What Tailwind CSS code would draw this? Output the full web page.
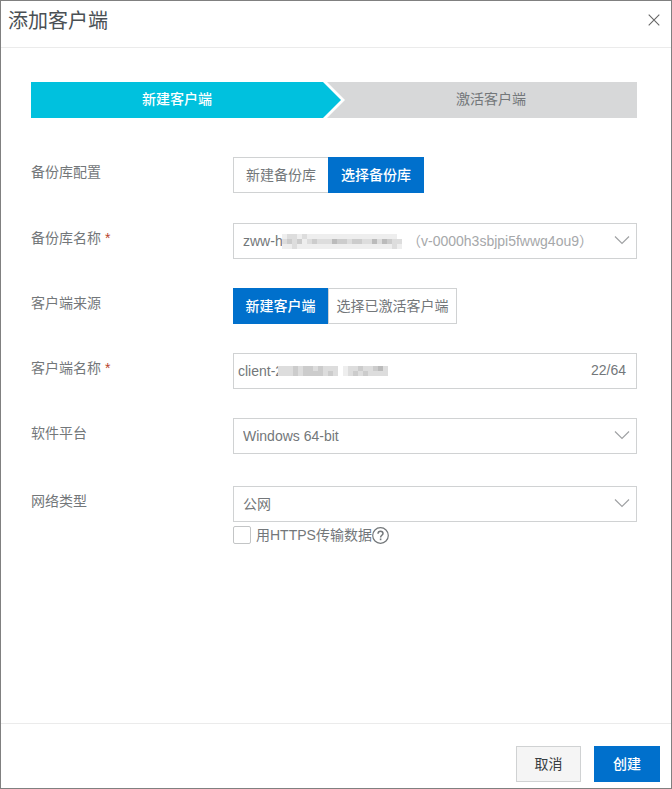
<!DOCTYPE html>
<html lang="zh-CN">
<head>
  <meta charset="UTF-8" />
  <meta name="viewport" content="width=device-width, initial-scale=1.0" />
  <title>添加客户端</title>
  <script src="https://cdn.jsdelivr.net/npm/@tailwindcss/browser@4"></script>
</head>
<body class="bg-white font-['Liberation_Sans','Noto_Sans_CJK_SC',sans-serif] text-sm text-[#73777a]">
  <div role="dialog" aria-labelledby="title" class="flex min-h-screen flex-col border border-[#808080]">
    <header class="flex h-[47px] items-center justify-between border-b border-[#ebebeb] pl-[7px] pr-[11px] pb-2">
      <h1 id="title" class="pt-0.5 text-xl text-[#4a5054]">添加客户端</h1>
      <button type="button" aria-label="关闭" class="text-[#666]">
        <svg class="size-3" viewBox="0 0 12 12" fill="none" stroke="currentColor" stroke-width="1.1"><path d="M.7.7l10.6 10.6M11.3.7L.7 11.3" /></svg>
      </button>
    </header>

    <main class="flex-1 pt-[34px] pr-[34px] pl-[30px]">
      <ol class="mb-[39px] flex h-9 text-center leading-[34px]">
        <li class="flex-1 bg-[#00c1de] font-medium text-white" aria-current="step">新建客户端</li>
        <li class="w-[22px] bg-[#d7d8d9]" aria-hidden="true">
          <svg class="block h-9 w-[22px]" viewBox="0 0 22 36">
            <path d="M0 0h4l18 18L4 36H0z" fill="#fff" />
            <path d="M0 0l18 18L0 36z" fill="#00c1de" />
          </svg>
        </li>
        <li class="flex-1 bg-[#d7d8d9]">激活客户端</li>
      </ol>

      <form id="client-form">
        <div class="mb-[30px] grid grid-cols-3">
          <span id="vault-mode" class="leading-[30px]">备份库配置</span>
          <div role="group" aria-labelledby="vault-mode" class="col-span-2 flex h-9">
            <button type="button" aria-pressed="false" class="w-[95px] border border-r-0 border-[#d0d2d3]">新建备份库</button>
            <button type="button" aria-pressed="true" class="w-24 bg-[#0070cc] font-medium text-white">选择备份库</button>
          </div>
        </div>

        <div class="mb-[29px] grid grid-cols-3">
          <label for="vault" class="leading-[30px]">备份库名称 <span class="text-[#b8452c]">*</span></label>
          <div class="relative col-span-2">
            <select id="vault" class="block h-9 w-full appearance-none border border-[#d0d2d3] pl-[9px] pr-9">
              <option>zww-h</option>
            </select>
            <div class="pointer-events-none absolute inset-y-0 left-[49px] right-2 flex items-center text-[#a6a8aa]">
              <svg data-mosaic="vault" class="h-[15px] w-[120px]" viewBox="0 0 120 15" shape-rendering="crispEdges"></svg>
              <span class="ml-[5px]">（v-0000h3sbjpi5fwwg4ou9）</span>
            </div>
            <svg class="pointer-events-none absolute top-3 right-[7px] h-3 w-4" viewBox="0 0 16 12" fill="none" stroke="#a0a2a4" stroke-width="1.2"><path d="M1 1.500l7 7 7-7" /></svg>
          </div>
        </div>

        <div class="mb-[29px] grid grid-cols-3">
          <span id="client-source" class="leading-[30px]">客户端来源</span>
          <div role="group" aria-labelledby="client-source" class="col-span-2 flex h-9">
            <button type="button" aria-pressed="true" class="w-[95px] bg-[#0070cc] font-medium text-white">新建客户端</button>
            <button type="button" aria-pressed="false" class="w-[129px] border border-[#d0d2d3]">选择已激活客户端</button>
          </div>
        </div>

        <div class="mb-[29px] grid grid-cols-3">
          <label for="client-name" class="leading-[30px]">客户端名称 <span class="text-[#b8452c]">*</span></label>
          <div class="relative col-span-2">
            <input id="client-name" type="text" value="client-2" class="block h-9 w-full border border-[#d0d2d3] pl-1 pr-14" />
            <svg data-mosaic="client" class="pointer-events-none absolute top-[13px] left-[45px] h-2.5 w-[110px]" viewBox="0 0 110 10" shape-rendering="crispEdges"></svg>
            <span class="pointer-events-none absolute inset-y-0 right-[11px] leading-[34px]">22/64</span>
          </div>
        </div>

        <div class="mb-8 grid grid-cols-3">
          <label for="platform" class="leading-[30px]">软件平台</label>
          <div class="relative col-span-2">
            <select id="platform" class="block h-9 w-full appearance-none border border-[#d0d2d3] pl-[9px] pr-9">
              <option>Windows 64-bit</option>
            </select>
            <svg class="pointer-events-none absolute top-3 right-[7px] h-3 w-4" viewBox="0 0 16 12" fill="none" stroke="#a0a2a4" stroke-width="1.2"><path d="M1 1.500l7 7 7-7" /></svg>
          </div>
        </div>

        <div class="grid grid-cols-3">
          <label for="network" class="leading-[30px]">网络类型</label>
          <div class="col-span-2">
            <div class="relative">
              <select id="network" class="block h-9 w-full appearance-none border border-[#d0d2d3] pl-[9px] pr-9">
                <option>公网</option>
              </select>
              <svg class="pointer-events-none absolute top-3 right-[7px] h-3 w-4" viewBox="0 0 16 12" fill="none" stroke="#a0a2a4" stroke-width="1.2"><path d="M1 1.500l7 7 7-7" /></svg>
            </div>
            <div class="mt-[3px] flex items-center">
              <input id="https" type="checkbox" class="mr-[5px] size-[18px] appearance-none rounded-xs border border-[#c3c5c6] checked:bg-[#0070cc]" />
              <label for="https">用HTTPS传输数据</label>
              <button type="button" aria-label="帮助">
                <svg class="size-[17px]" viewBox="0 0 17 17" fill="none" stroke="#73777a" stroke-width="1.2">
                  <circle cx="8.500" cy="8.500" r="7.800" />
                  <path d="M6 6.800c0-1.600 1-2.600 2.500-2.600S11 5.100 11 6.500c0 1.700-2.400 1.900-2.400 3.900" stroke-width="1.500" />
                  <path d="M8.600 11.500v1.700" stroke-width="1.600" />
                </svg>
              </button>
            </div>
          </div>
        </div>
      </form>
    </main>

    <footer class="flex justify-end gap-[13px] border-t border-[#ebebeb] pt-[22px] pr-[11px] pb-1.5">
      <button type="button" class="h-9 w-[65px] border border-[#d0d2d3] bg-[#f5f5f5] text-[#373d41]">取消</button>
      <button type="submit" form="client-form" class="h-9 w-[66px] bg-[#0070cc] font-medium text-white">创建</button>
    </footer>
  </div>

  <script>
    // grey levels of the blocks that hide private names, one hex digit per block
    const mosaics = {
      vault: { size: 5, rows: ['eddedeeeeeeeeeeeeeeeeeef', 'dcdcedcdddbccdccddbdbcdd', 'eedeeeeeeeeeeeeeeeeeeede'] },
      client: { size: 5, rows: ['dddcdccdcdddfeddcddcbd', 'dddcdccccdcdfedcdcdddd'] },
    };

    document.querySelectorAll('[data-mosaic]').forEach(svg => {
      const { size, rows } = mosaics[svg.dataset.mosaic];
      svg.innerHTML = rows.map((row, y) =>
        [...row].map((c, x) =>
          `<rect x="${x * size}" y="${y * size}" width="${size}" height="${size}" fill="#${c.repeat(3)}" />`
        ).join('')
      ).join('');
    });
  </script>
</body>
</html>
